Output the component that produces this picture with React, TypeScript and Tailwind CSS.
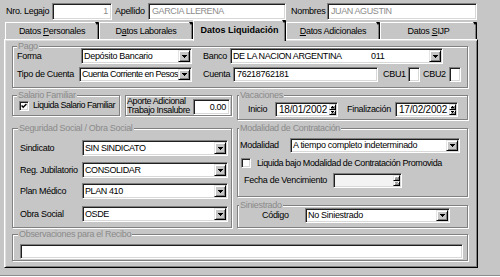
import React from "react";

const sunken =
  "border border-t-[#808080] border-l-[#808080] border-b-white border-r-white shadow-[inset_1px_1px_0_#202020,inset_-1px_-1px_0_#d8d8d8]";
const raised =
  "bg-[#c6c6c6] border border-t-[#e4e4e4] border-l-[#e4e4e4] border-b-black border-r-black shadow-[inset_1px_1px_0_#fff,inset_-1px_-1px_0_#808080]";
const etched = "border border-[#808080] shadow-[inset_1px_1px_0_#fff,1px_1px_0_#fff]";

function DownArrow({ color = "#000", small }: { color?: string; small?: boolean }) {
  if (small) {
    return (
      <svg width="3" height="2" viewBox="0 0 3 2" shapeRendering="crispEdges">
        <path d="M0 0h3v1H0zM1 1h1v1H1z" fill={color} />
      </svg>
    );
  }
  return (
    <svg width="5" height="3" viewBox="0 0 5 3" shapeRendering="crispEdges">
      <path d="M0 0h5v1H0zM1 1h3v1H1zM2 2h1v1H2z" fill={color} />
    </svg>
  );
}

function UpArrow({ color = "#000" }: { color?: string }) {
  return (
    <svg width="3" height="2" viewBox="0 0 3 2" shapeRendering="crispEdges">
      <path d="M1 0h1v1H1zM0 1h3v1H0z" fill={color} />
    </svg>
  );
}

function isUpper(t: string) {
  return t.length > 0 && t === t.toUpperCase() && /[A-Z]/.test(t);
}

function Combo({ text, className, tight }: { text: React.ReactNode; className: string; tight?: boolean }) {
  const upper = typeof text === "string" && isUpper(text);
  return (
    <div className={`${sunken} bg-white flex p-[1px] ${className}`}>
      <div
        className={`flex-1 min-w-0 overflow-hidden whitespace-nowrap pl-[1px] flex items-center ${
          tight ? "tracking-[-0.5px]" : upper ? "tracking-[-0.4px]" : ""
        }`}
      >
        {text}
      </div>
      <div className={`${raised} w-[12px] shrink-0 flex items-center justify-center`}>
        <DownArrow />
      </div>
    </div>
  );
}

function Field({
  text = "",
  className,
  right,
  muted,
}: {
  text?: string;
  className: string;
  right?: boolean;
  muted?: boolean;
}) {
  return (
    <div
      className={`${sunken} bg-white flex items-center px-[3px] whitespace-nowrap overflow-hidden ${
        right ? "justify-end" : ""
      } ${muted ? "text-[#8c8c8c]" : "text-black"} ${isUpper(text) ? "tracking-[-0.4px]" : ""} ${className}`}
    >
      {text}
    </div>
  );
}

function DateField({ text = "", className, disabled }: { text?: string; className: string; disabled?: boolean }) {
  const c = disabled ? "#9a9a9a" : "#000";
  return (
    <div className={`${sunken} ${disabled ? "bg-[#f3f3f3]" : "bg-white"} flex p-[1px] ${className}`}>
      <div className="flex-1 flex items-center pl-[2px] text-[10px] tracking-[-0.2px] whitespace-nowrap">{text}</div>
      <div className="w-[7px] flex flex-col shrink-0">
        <div className={`${raised} flex-1 flex items-center justify-center`}>
          <UpArrow color={c} />
        </div>
        <div className={`${raised} flex-1 flex items-center justify-center`}>
          <DownArrow small color={c} />
        </div>
      </div>
    </div>
  );
}

function Check({ checked }: { checked?: boolean }) {
  return (
    <div className={`${sunken} bg-white w-[10px] h-[10px] shrink-0 relative`}>
      {checked && (
        <svg className="absolute left-[1px] top-[1px]" width="6" height="6" viewBox="0 0 6 6">
          <path d="M0.6 2.6 L2.2 4.3 L5.4 0.9" stroke="#000" strokeWidth="1.4" fill="none" />
        </svg>
      )}
    </div>
  );
}

function Group({
  title,
  legendPos = "left-[4px]",
  className,
  children,
}: {
  title?: string;
  legendPos?: string;
  className: string;
  children: React.ReactNode;
}) {
  return (
    <div className={`relative ${etched} ${className}`}>
      {title && (
        <span
          className={`absolute top-[-6px] ${legendPos} px-[1px] bg-[#c6c6c6] text-[#8a8a8a] leading-[11px] whitespace-nowrap`}
        >
          {title}
        </span>
      )}
      {children}
    </div>
  );
}

function Tab({ className, active, children }: { className: string; active?: boolean; children: React.ReactNode }) {
  return (
    <div
      className={`relative flex items-center justify-center whitespace-nowrap bg-[#c6c6c6] border-t border-l border-r border-t-white border-l-white border-r-black shadow-[inset_-1px_0_0_#808080] ${
        active ? "h-[21px] -mb-[2px] z-10 font-bold pb-[1px] tracking-[0px]" : "h-[17px]"
      } ${className}`}
    >
      {children}
      <span className="absolute -right-[1px] -top-[1px] w-0 h-0 border-l-[2px] border-r-[2px] border-t-[3px] border-l-transparent border-r-transparent border-t-black" />
    </div>
  );
}

export default function App() {
  return (
    <div className="w-[500px] h-[277px] overflow-hidden bg-[#c6c6c6] font-['Liberation_Sans',Arial,sans-serif] text-[9px] leading-[11px] tracking-[-0.3px] text-black shadow-[inset_0_-1px_0_#fff,inset_0_-2px_0_#8c8c8c]">
      {/* Cabecera */}
      <div className="flex items-center h-[17px] mt-[3px] pl-[6px] whitespace-nowrap">
        <span className="w-[46px]">Nro. Legajo</span>
        <Field className="w-[60px] h-[17px]" right muted text="1" />
        <span className="w-[33px] ml-[3px]">Apellido</span>
        <Field className="w-[138px] h-[17px]" muted text="GARCIA LLERENA" />
        <span className="w-[36px] ml-[5px]">Nombres</span>
        <Field className="w-[150px] h-[17px]" muted text="JUAN AGUSTIN" />
      </div>

      {/* Solapas */}
      <div className="flex items-end h-[19px] pl-[5px]">
        <Tab className="w-[94px]">
          Datos&nbsp;<u>P</u>ersonales
        </Tab>
        <Tab className="w-[94px]">
          D<u>a</u>tos Laborales
        </Tab>
        <Tab className="w-[93px]" active>
          Datos Liquidación
        </Tab>
        <Tab className="w-[94px]">
          <u>D</u>atos Adicionales
        </Tab>
        <Tab className="w-[97px]">
          Datos&nbsp;<u>S</u>IJP
        </Tab>
      </div>

      {/* Panel */}
      <div className="ml-[4px] w-[474px] h-[229px] border border-t-white border-l-white border-b-black border-r-black shadow-[inset_1px_1px_0_#dfdfdf,inset_-1px_-1px_0_#808080] pt-[6px] pl-[7px] whitespace-nowrap">
        {/* Pago */}
        <Group title="Pago" className="w-[456px] h-[42px] pt-[1px] pl-[4px]">
          <div className="flex items-center h-[16px]">
            <span className="w-[64px]">Forma</span>
            <Combo className="w-[111px] h-[16px]" text="Depósito Bancario" />
            <span className="w-[27px] ml-[11px]">Banco</span>
            <Combo
              className="w-[213px] h-[16px]"
              text={
                <>
                  <span className="inline-block w-[138px] tracking-[-0.4px]">DE LA NACION ARGENTINA</span>011
                </>
              }
            />
          </div>
          <div className="flex items-center h-[15px] mt-[3px]">
            <span className="w-[62px]">Tipo de Cuenta</span>
            <Combo className="w-[113px] h-[15px]" tight text="Cuenta Corriente en Pesos" />
            <span className="w-[30px] ml-[11px]">Cuenta</span>
            <Field className="w-[145px] h-[15px]" text="76218762181" />
            <span className="w-[25px] ml-[5px]">CBU1</span>
            <Field className="w-[12px] h-[15px]" />
            <span className="w-[26px] ml-[3px]">CBU2</span>
            <Field className="w-[12px] h-[15px]" />
          </div>
        </Group>

        {/* Fila 2 */}
        <div className="flex items-start mt-[7px]">
          <Group title="Salario Familiar" className="w-[108px] h-[21px] flex items-center pl-[6px]">
            <Check checked />
            <span className="ml-[4px] tracking-[-0.5px]">Liquida Salario Familiar</span>
          </Group>
          <Group className="ml-[5px] w-[107px] h-[21px] flex px-[1px]">
            <div className="leading-[9px] pt-[1px] tracking-[-0.4px]">
              Aporte Adicional
              <br />
              Trabajo Insalubre
            </div>
            <Field className="ml-auto self-end w-[37px] h-[16px]" right text="0.00" />
          </Group>
          <Group title="Vacaciones" legendPos="left-[1px]" className="ml-[5px] w-[231px] h-[25px] pt-[6px] pl-[10px]">
            <div className="flex items-center h-[15px]">
              <span className="w-[27px]">Inicio</span>
              <DateField className="w-[63px] h-[15px]" text="18/01/2002" />
              <span className="w-[48px] ml-[9px]">Finalización</span>
              <DateField className="w-[63px] h-[15px]" text="17/02/2002" />
            </div>
          </Group>
        </div>

        {/* Fila 3 */}
        <div className="flex items-start mt-[8px]">
          <Group title="Seguridad Social / Obra Social" legendPos="left-[5px]" className="w-[220px] h-[100px] pt-[11px] pl-[7px]">
            <div className="flex items-center h-[16px]">
              <span className="w-[62px]">Sindicato</span>
              <Combo className="w-[146px] h-[16px]" text="SIN SINDICATO" />
            </div>
            <div className="flex items-center h-[16px] mt-[6px]">
              <span className="w-[62px]">Reg. Jubilatorio</span>
              <Combo className="w-[146px] h-[16px]" text="CONSOLIDAR" />
            </div>
            <div className="flex items-center h-[16px] mt-[5px]">
              <span className="w-[62px]">Plan Médico</span>
              <Combo className="w-[146px] h-[16px]" text="PLAN 410" />
            </div>
            <div className="flex items-center h-[16px] mt-[7px]">
              <span className="w-[62px]">Obra Social</span>
              <Combo className="w-[146px] h-[16px]" text="OSDE" />
            </div>
          </Group>

          <div className="ml-[5px] w-[231px] flex flex-col">
            <Group title="Modalidad de Contratación" legendPos="left-[1px]" className="w-[231px] h-[69px] pt-[9px] pl-[2px]">
              <div className="flex items-center h-[15px]">
                <span className="w-[50px]">Modalidad</span>
                <Combo className="w-[170px] h-[15px]" text="A tiempo completo indeterminado" />
              </div>
              <div className="flex items-center h-[10px] mt-[5px]">
                <div className="ml-[1px]">
                  <Check />
                </div>
                <span className="ml-[6px] tracking-[-0.4px]">Liquida bajo Modalidad de Contratación Promovida</span>
              </div>
              <div className="flex items-center h-[15px] mt-[5px]">
                <span className="w-[89px] ml-[4px]">Fecha de Vencimiento</span>
                <DateField className="w-[69px] h-[15px]" disabled />
              </div>
            </Group>
            <Group title="Siniestrado" legendPos="left-[1px]" className="mt-[8px] w-[231px] h-[23px] pt-[2px] pl-[24px]">
              <div className="flex items-center h-[15px]">
                <span className="w-[43px]">Código</span>
                <Combo className="w-[145px] h-[15px]" text="No Siniestrado" />
              </div>
            </Group>
          </div>
        </div>

        {/* Observaciones */}
        <Group title="Observaciones para el Recibo" legendPos="left-[5px]" className="mt-[6px] w-[456px] h-[27px] pt-[9px] pl-[7px]">
          <Field className="w-[443px] h-[15px]" />
        </Group>
      </div>
    </div>
  );
}
